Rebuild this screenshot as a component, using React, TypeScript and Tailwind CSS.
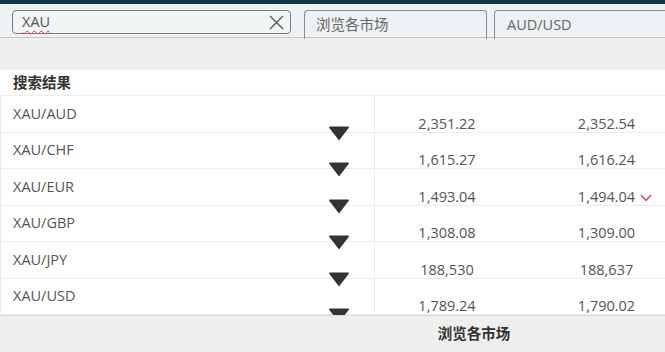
const rows = [
  { pair: "XAU/AUD", bid: "2,351.22", ask: "2,352.54" },
  { pair: "XAU/CHF", bid: "1,615.27", ask: "1,616.24" },
  { pair: "XAU/EUR", bid: "1,493.04", ask: "1,494.04", down: true },
  { pair: "XAU/GBP", bid: "1,308.08", ask: "1,309.00" },
  { pair: "XAU/JPY", bid: "188,530", ask: "188,637" },
  { pair: "XAU/USD", bid: "1,789.24", ask: "1,790.02" },
];

function Triangle() {
  return (
    <svg width="22" height="15" viewBox="0 0 22 15" className="absolute left-[327px] bottom-[-9px] z-10">
      <path d="M1 1.5 Q1 0.5 2 0.5 L20 0.5 Q21 0.5 21 1.5 L11 14.5 Z" fill="#333333" />
    </svg>
  );
}

export default function App() {
  return (
    <div className="relative h-[352px] w-[665px] overflow-hidden bg-white font-['Open_Sans','Noto_Sans_CJK_SC',sans-serif] text-[14.5px] text-[#555]">
      <div className="h-[4px] bg-[#12394a]" />
      <header className="flex h-[34px] items-start gap-[13px] border-b border-[#c4c7c9] bg-[#edf2f4] pl-[12px] pt-[6px]">
        <div className="flex h-[24px] w-[279px] items-center justify-between rounded-[4px] border border-[#7a7a7a] bg-[#f2f5f6] pl-[9px] pr-[5px]">
          <span className="underline decoration-wavy decoration-[#e0414b] decoration-1 underline-offset-[3px]">XAU</span>
          <svg width="17" height="17" viewBox="0 0 17 17" stroke="#555" strokeWidth="1.3" fill="none">
            <path d="M2 2 L15 15 M15 2 L2 15" />
          </svg>
        </div>
        <div className="flex h-[29px] w-[183px] items-center rounded-t-[4px] border border-b-0 border-[#8a8a8a] pl-[11px] text-[#666]">
          浏览各市场
        </div>
        <div className="ml-[-6px] flex h-[29px] flex-1 items-center rounded-tl-[4px] border border-b-0 border-r-0 border-[#8a8a8a] pl-[12px] text-[#666]">
          AUD/USD
        </div>
      </header>
      <div className="h-[32px] bg-[#efefef]" />
      <div className="flex h-[25px] items-center pl-[13px] font-semibold text-[#333]">搜索结果</div>
      <div className="grid h-[220px] grid-rows-6 border-t border-l border-[#ececec]">
        {rows.map((r) => (
          <div key={r.pair} className="relative flex border-b border-[#ececec]">
            <div className="flex w-[373px] items-center pl-[12px]">{r.pair}</div>
            <Triangle />
            <div className="flex w-[145px] items-end justify-center border-l border-[#ececec] pb-[1px] leading-[14px]">{r.bid}</div>
            <div className="flex flex-1 items-end justify-center pb-[1px] pl-[29px] leading-[14px]">
              <span className="relative">
                {r.ask}
                {r.down && (
                  <svg width="12" height="8" viewBox="0 0 12 8" className="absolute left-full top-[4px] ml-[5px]" fill="none" stroke="#d9445a" strokeWidth="1.5">
                    <path d="M1 1 L6 6.5 L11 1" />
                  </svg>
                )}
              </span>
            </div>
          </div>
        ))}
      </div>
      <footer className="relative z-20 flex h-[37px] items-center justify-center border-t border-[#dcdcdc] bg-[#efefef] pl-[283px] font-semibold text-[#333]">
        浏览各市场
      </footer>
    </div>
  );
}
